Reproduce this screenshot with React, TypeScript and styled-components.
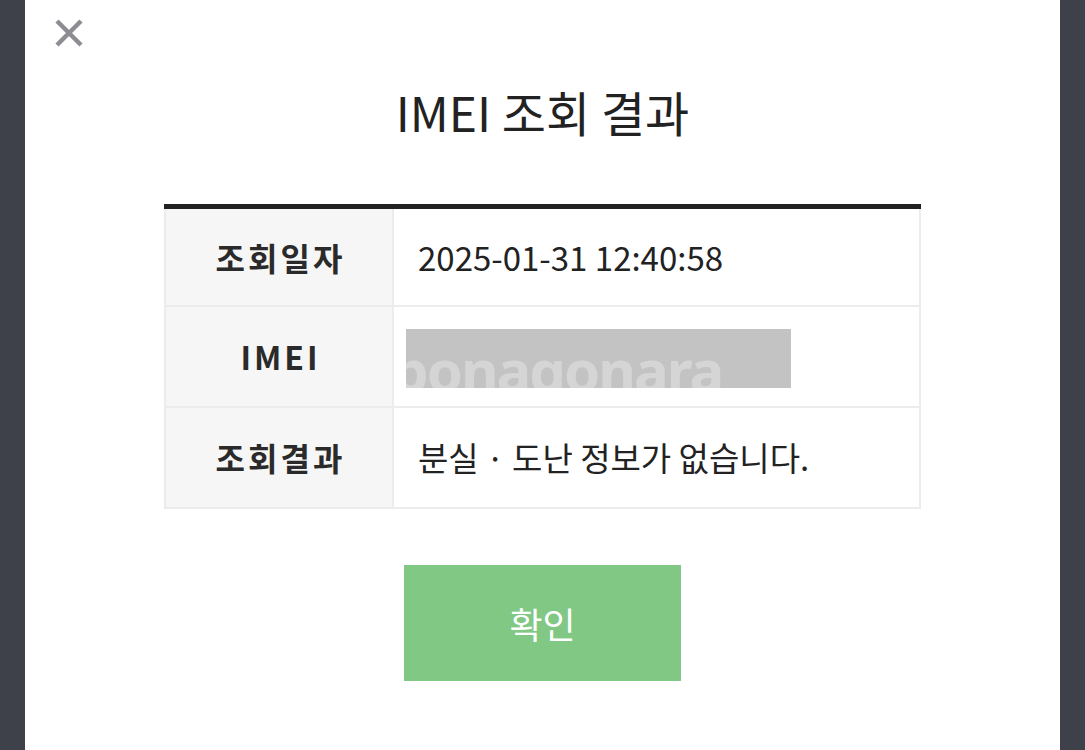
import React from 'react';
import styled, { createGlobalStyle } from 'styled-components';

const GlobalStyle = createGlobalStyle`
  html, body {
    margin: 0;
    padding: 0;
    background: #3f414a;
  }
  body {
    font-family: 'Noto Sans CJK KR', 'Noto Sans', sans-serif;
    color: #222;
  }
`;

const Modal = styled.div`
  position: relative;
  margin: 0 25px;
  height: 750px;
  background: #fff;
  display: flex;
  flex-direction: column;
  align-items: center;
  overflow: hidden;
`;

const CloseButton = styled.button`
  position: absolute;
  top: 18px;
  left: 29px;
  width: 30px;
  height: 30px;
  padding: 0;
  border: none;
  background: none;
  cursor: pointer;
`;

const Title = styled.h1`
  margin: 78px 0 0;
  font-size: 48px;
  font-weight: 400;
  line-height: 66px;
  color: #222;
`;

const ResultTable = styled.table`
  margin-top: 60px;
  width: 757px;
  border-collapse: collapse;
  border-top: 5px solid #222;
`;

const Row = styled.tr<{ $tall?: boolean }>`
  height: ${p => (p.$tall ? 101 : 99)}px;
`;

const Label = styled.th`
  width: 224px;
  background: #f6f6f6;
  border: 2px solid #ececec;
  border-top: none;
  font-size: 32px;
  font-weight: 700;
  letter-spacing: 3px;
  text-indent: 3px;
  color: #2a2a2a;
  text-align: center;
`;

const Value = styled.td`
  border: 2px solid #ececec;
  border-top: none;
  padding: 0 24px;
  font-size: 33px;
  color: #222;
  text-align: left;
`;

const Masked = styled.div`
  position: relative;
  margin: 4px 0 0 -12px;
  width: 385px;
  height: 59px;
  background: #c3c3c3;
  overflow: hidden;
`;

const Watermark = styled.span`
  position: absolute;
  left: -14px;
  top: 12px;
  font-family: 'Noto Sans', sans-serif;
  font-size: 58px;
  font-weight: 700;
  letter-spacing: -2px;
  color: rgba(255, 255, 255, 0.3);
  line-height: 1;
  white-space: nowrap;
`;

const ConfirmButton = styled.button`
  margin-top: 56px;
  width: 277px;
  height: 116px;
  border: none;
  background: #80c884;
  color: #fff;
  font-family: inherit;
  font-size: 36px;
  font-weight: 400;
  cursor: pointer;
`;

const rows = [
  { label: '조회일자', value: '2025-01-31 12:40:58' },
  { label: 'IMEI', value: null },
  { label: '조회결과', value: '분실 · 도난 정보가 없습니다.' },
];

export default function App() {
  return (
    <>
      <GlobalStyle />
      <Modal>
        <CloseButton aria-label="닫기">
          <svg width="30" height="30" viewBox="0 0 30 30">
            <path
              d="M3 3 L27 27 M27 3 L3 27"
              stroke="#8c8c92"
              strokeWidth="4.5"
              fill="none"
            />
          </svg>
        </CloseButton>
        <Title>IMEI 조회 결과</Title>
        <ResultTable>
          <tbody>
            {rows.map((row, i) => (
              <Row key={row.label} $tall={i > 0}>
                <Label>{row.label}</Label>
                <Value>
                  {row.value ?? (
                    <Masked>
                      <Watermark>bonagonara</Watermark>
                    </Masked>
                  )}
                </Value>
              </Row>
            ))}
          </tbody>
        </ResultTable>
        <ConfirmButton>확인</ConfirmButton>
      </Modal>
    </>
  );
}
